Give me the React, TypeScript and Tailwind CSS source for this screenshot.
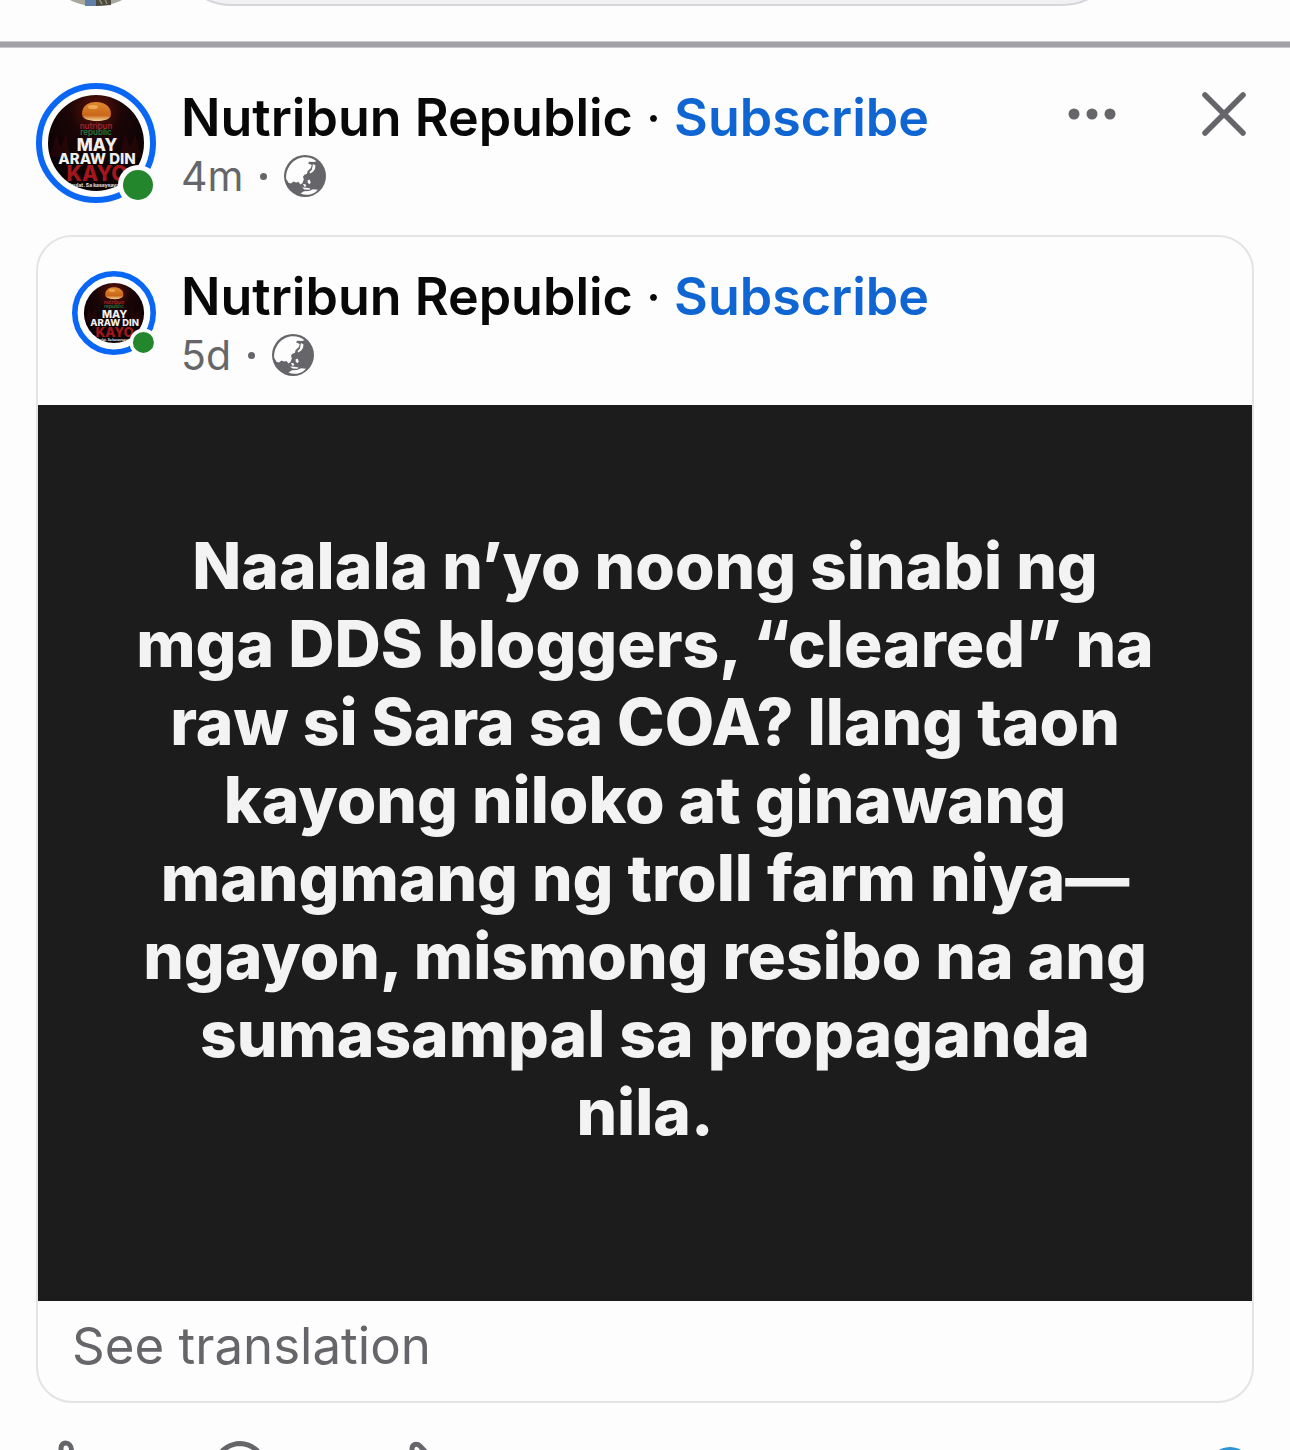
import React from "react";

function Avatar({ size, photoRadius, ring, id }: { size: string; photoRadius: number; ring: number; id: string }) {
  return (
    <svg viewBox="0 0 120 120" className={`${size} shrink-0 overflow-visible`} role="img" aria-label="Nutribun Republic, online">
      <defs>
        <clipPath id={`${id}-clip`}>
          <circle cx="60" cy="60" r="48" />
        </clipPath>
        <radialGradient id={`${id}-glow`} cx="0.5" cy="0.16" r="0.6">
          <stop offset="0" stopColor="#5e1408" />
          <stop offset="0.45" stopColor="#1b0507" />
          <stop offset="1" stopColor="#0b0304" />
        </radialGradient>
        <linearGradient id={`${id}-bun`} x1="0" y1="0" x2="0" y2="1">
          <stop offset="0" stopColor="#e08a2c" />
          <stop offset="0.7" stopColor="#c9661a" />
          <stop offset="1" stopColor="#f6d79a" />
        </linearGradient>
      </defs>
      <circle cx="60" cy="60" r={60 - ring / 2} fill="#fff" stroke="#0a66f5" strokeWidth={ring} />
      <g transform={`translate(60 60) scale(${photoRadius / 48}) translate(-60 -60)`}>
        <g clipPath={`url(#${id}-clip)`}>
          <rect x="10" y="10" width="100" height="100" fill={`url(#${id}-glow)`} />
          <path d="M14 74l6-22 5 12 5-14 4 24zM84 74l5-24 5 14 5-12 7 22z" fill="#5a0d10" opacity=".25" />
          <path d="M46 31c0-8 6-12 14-12s15 4 15 12c0 5-6 7-14 7s-15-2-15-7z" fill={`url(#${id}-bun)`} />
          <ellipse cx="57" cy="24" rx="5" ry="2" fill="#f4b566" opacity=".8" />
          <g textAnchor="middle" fontFamily="Inter, sans-serif" fontWeight="700">
            <text x="60" y="46" fontSize="8" fontWeight="600" fill="#a3242c">nutribun</text>
            <text x="60" y="52" fontSize="8" fontWeight="600" fill="#1f7a43">republic</text>
            <text x="61" y="68" fontSize="17" fontWeight="800" fill="#f1eeee">MAY</text>
            <text x="61" y="81" fontSize="15" fontWeight="800" fill="#f1eeee">ARAW DIN</text>
            <text x="61" y="98" fontSize="21" fontWeight="800" fill="#a3161b">KAYO</text>
            <text x="60" y="104" fontSize="5" fill="#e8e2e2">Isulat. Sa kasaysayan</text>
          </g>
        </g>
      </g>
      <circle cx="102" cy="102" r="20" fill="#fdfdfd" />
      <circle cx="102" cy="102" r="15" fill="#23862c" />
    </svg>
  );
}

function Globe() {
  return (
    <svg viewBox="0 0 42 42" className="size-[42px]" role="img" aria-label="Public">
      <circle cx="21" cy="21" r="21" fill="#66666a" />
      <g fill="#fdfdfd">
        <path d="M2.200 24C1.500 12 10 2.200 21 2.200c4.500 0 8.500 1.500 11.500 4l-2.500.8-5-.2-.8 1.800 3.600 1.400-1 3-3.300 3.200-.5 2.500-2.500 1-1.500 1.800.8 3-1.300 3.500-2 1.500-2-2.500-2.500.5-2.500-1-2.500 2-2.500-.8-1-1.700z" />
        <path d="M29 9l2.500 1.500-.5 3.500-2 2.800-2.800 1.700-.7-1.500 2.200-2z" />
        <path d="M23.500 25.500l2-1 1.300 3-1.500 1.800-1.500-1.500zM19 29l2.500.3.8 2-2 .5zM18 32.500l4.500.3 4 .7-1 1.200-5-.2z" />
        <path d="M16.500 38.500l3.500-2.200 5-.4 4-1.700 5 .6-3 2.600c-4.500 2.600-9.500 3-14.500 1.100z" />
      </g>
    </svg>
  );
}

function PostHeading({ age }: { age: string }) {
  return (
    <div className="min-w-0 grow">
      <h2 className="text-[52px] leading-[60px] font-semibold whitespace-nowrap text-[#080809]">
        Nutribun Republic <span className="font-normal">·</span>{" "}
        <a href="#subscribe" className="text-[#0f65d2]">Subscribe</a>
      </h2>
      <p className="flex items-center gap-[17px] text-[41px] leading-[56px] text-[#66666a]">
        <span>{age}</span>
        <span className="size-[7px] rounded-full bg-[#66666a]" />
        <Globe />
      </p>
    </div>
  );
}

const lines = [
  "Naalala n’yo noong sinabi ng",
  "mga DDS bloggers, “cleared” na",
  "raw si Sara sa COA? Ilang taon",
  "kayong niloko at ginawang",
  "mangmang ng troll farm niya—",
  "ngayon, mismong resibo na ang",
  "sumasampal sa propaganda",
  "nila.",
];

export default function App() {
  return (
    <main className="overflow-hidden bg-[#fdfdfd] font-['Inter','Liberation_Sans',sans-serif]">
      <div className="flex h-[6px] items-end gap-4 overflow-hidden pr-[168px] pl-9">
        <svg viewBox="0 0 120 120" className="size-[120px] shrink-0" role="img" aria-label="Your profile">
          <circle cx="60" cy="60" r="60" fill="#a9a69c" />
          <path d="M49 112h11v8H49z" fill="#5f7fa8" />
          <path d="M60 112h15v7l-15 1z" fill="#4b4a3c" />
          <path d="M63 113l3 5M69 113l2 5" stroke="#8d8b76" strokeWidth="1.500" />
        </svg>
        <div className="h-[120px] grow rounded-full border-2 border-[#d6d6da] bg-[#f1f1f4]" />
      </div>

      <hr className="mt-[35px] h-[7px] border-y border-[#c9c8ce] bg-[#a2a1a8]" />

      <article className="px-9">
        <header className="flex pt-[35px]">
          <Avatar size="size-[120px]" photoRadius={48} ring={6} id="page" />
          <div className="ml-[25px] flex min-w-0 grow pt-[5px]">
            <PostHeading age="4m" />
          </div>
          <div className="flex items-start gap-[85px] pt-2 pr-[7px] text-[#66666a]">
            <button type="button" aria-label="More options" className="h-[46px]">
              <svg viewBox="0 0 48 46" className="h-[46px] w-[48px]" fill="currentColor">
                <circle cx="6" cy="23" r="5.500" />
                <circle cx="24" cy="23" r="5.500" />
                <circle cx="42" cy="23" r="5.500" />
              </svg>
            </button>
            <button type="button" aria-label="Close" className="h-[46px]">
              <svg viewBox="0 0 46 46" className="size-[46px]" stroke="currentColor" strokeWidth="5.500" strokeLinecap="round">
                <path d="M4 4l38 38M42 4L4 42" />
              </svg>
            </button>
          </div>
        </header>

        <section className="mt-[31px] overflow-hidden rounded-[36px] border-2 border-[#e4e4e6]">
          <header className="flex h-[168px] gap-[25px] pt-[30px] pl-[34px]">
            <div className="pt-1">
              <Avatar size="size-[84px]" photoRadius={43} ring={8} id="shared" />
            </div>
            <PostHeading age="5d" />
          </header>
          <div className="bg-[#1c1c1d] px-6 pt-[122px] pb-[150px]">
            <p className="text-center text-[64px] leading-[78px] font-extrabold whitespace-nowrap text-[#f3f3f4]">
              {lines.map((line) => (
                <span key={line} className="block">{line}</span>
              ))}
            </p>
          </div>
          <div className="px-[34px] pt-[13px] pb-[23px]">
            <button type="button" className="text-[51px] leading-[64px] text-[#66666a]">See translation</button>
          </div>
        </section>

        <footer className="mt-[37px] flex h-[11px] items-start overflow-hidden text-[#66666a]">
          <button type="button" aria-label="Like" className="w-[173px]">
            <svg viewBox="0 0 60 60" className="size-[60px]" fill="none" stroke="currentColor" strokeWidth="5" strokeLinejoin="round">
              <path d="M25 17V8c0-3 2-5 4.500-5C33 3 35.500 6 35.500 10c0 6-1 10-2 15h17c5 0 7 4 5 8l-6 20c-1 4-4 6-8 6H12c-4 0-6-2-6-6V32c0-4 2-6 6-6h4c4-2 9-5 9-9z" />
            </svg>
          </button>
          <button type="button" aria-label="Comment" className="w-[173px]">
            <svg viewBox="0 0 60 60" className="size-[60px]" fill="none" stroke="currentColor" strokeWidth="5" strokeLinejoin="round">
              <path d="M31 3.500a26 26 0 1 1-13 49L6 56l4-12A26 26 0 0 1 31 3.500z" />
            </svg>
          </button>
          <button type="button" aria-label="Share">
            <svg viewBox="0 0 60 60" className="size-[60px]" fill="none" stroke="currentColor" strokeWidth="5" strokeLinejoin="round">
              <path d="M30 17V9c0-5 5-6 8-3l19 20c2 2 2 4 0 6L37 53c-3 3-7 2-7-2V41C19 41 12 45 6 54c0-18 8-33 24-37z" />
            </svg>
          </button>
          <span className="mt-[7px] mr-[3px] ml-auto size-[42px] shrink-0 rounded-full bg-[#2b95d6]" />
        </footer>
      </article>
    </main>
  );
}
